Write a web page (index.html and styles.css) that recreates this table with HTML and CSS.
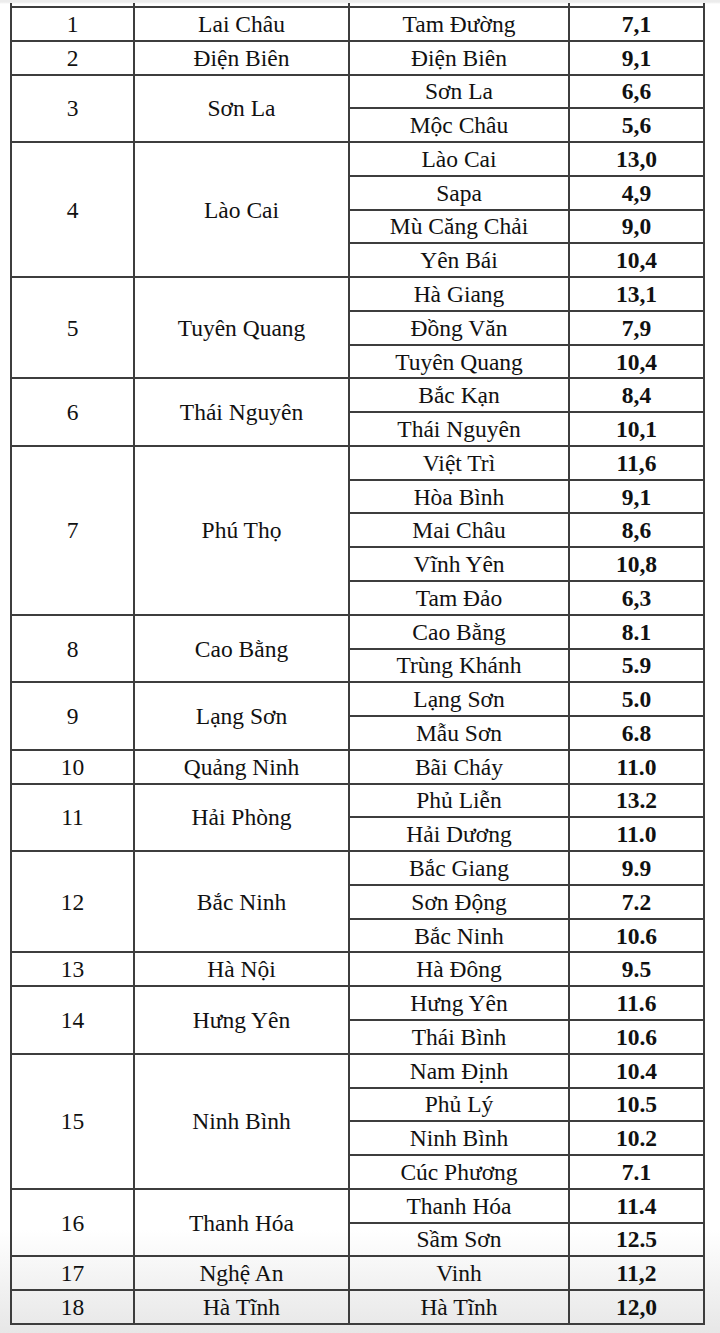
FILE: index.html
```html
<!DOCTYPE html>
<html lang="vi">
<head>
<meta charset="utf-8">
<title>Bảng</title>
<link rel="stylesheet" href="styles.css">
</head>
<body>
<table class="grid">
<colgroup><col class="c1"><col class="c2"><col class="c3"><col class="c4"></colgroup>
<tbody>
<tr class="stub"><td></td><td></td><td></td><td></td></tr>
<tr><td>1</td><td>Lai Châu</td><td>Tam Đường</td><td class="v">7,1</td></tr>
<tr><td>2</td><td>Điện Biên</td><td>Điện Biên</td><td class="v">9,1</td></tr>
<tr><td rowspan="2">3</td><td rowspan="2">Sơn La</td><td>Sơn La</td><td class="v">6,6</td></tr>
<tr><td>Mộc Châu</td><td class="v">5,6</td></tr>
<tr><td rowspan="4">4</td><td rowspan="4">Lào Cai</td><td>Lào Cai</td><td class="v">13,0</td></tr>
<tr><td>Sapa</td><td class="v">4,9</td></tr>
<tr><td>Mù Căng Chải</td><td class="v">9,0</td></tr>
<tr><td>Yên Bái</td><td class="v">10,4</td></tr>
<tr><td rowspan="3">5</td><td rowspan="3">Tuyên Quang</td><td>Hà Giang</td><td class="v">13,1</td></tr>
<tr><td>Đồng Văn</td><td class="v">7,9</td></tr>
<tr><td>Tuyên Quang</td><td class="v">10,4</td></tr>
<tr><td rowspan="2">6</td><td rowspan="2">Thái Nguyên</td><td>Bắc Kạn</td><td class="v">8,4</td></tr>
<tr><td>Thái Nguyên</td><td class="v">10,1</td></tr>
<tr><td rowspan="5">7</td><td rowspan="5">Phú Thọ</td><td>Việt Trì</td><td class="v">11,6</td></tr>
<tr><td>Hòa Bình</td><td class="v">9,1</td></tr>
<tr><td>Mai Châu</td><td class="v">8,6</td></tr>
<tr><td>Vĩnh Yên</td><td class="v">10,8</td></tr>
<tr><td>Tam Đảo</td><td class="v">6,3</td></tr>
<tr><td rowspan="2">8</td><td rowspan="2">Cao Bằng</td><td>Cao Bằng</td><td class="v">8.1</td></tr>
<tr><td>Trùng Khánh</td><td class="v">5.9</td></tr>
<tr><td rowspan="2">9</td><td rowspan="2">Lạng Sơn</td><td>Lạng Sơn</td><td class="v">5.0</td></tr>
<tr><td>Mẫu Sơn</td><td class="v">6.8</td></tr>
<tr><td>10</td><td>Quảng Ninh</td><td>Bãi Cháy</td><td class="v">11.0</td></tr>
<tr><td rowspan="2">11</td><td rowspan="2">Hải Phòng</td><td>Phủ Liễn</td><td class="v">13.2</td></tr>
<tr><td>Hải Dương</td><td class="v">11.0</td></tr>
<tr><td rowspan="3">12</td><td rowspan="3">Bắc Ninh</td><td>Bắc Giang</td><td class="v">9.9</td></tr>
<tr><td>Sơn Động</td><td class="v">7.2</td></tr>
<tr><td>Bắc Ninh</td><td class="v">10.6</td></tr>
<tr><td>13</td><td>Hà Nội</td><td>Hà Đông</td><td class="v">9.5</td></tr>
<tr><td rowspan="2">14</td><td rowspan="2">Hưng Yên</td><td>Hưng Yên</td><td class="v">11.6</td></tr>
<tr><td>Thái Bình</td><td class="v">10.6</td></tr>
<tr><td rowspan="4">15</td><td rowspan="4">Ninh Bình</td><td>Nam Định</td><td class="v">10.4</td></tr>
<tr><td>Phủ Lý</td><td class="v">10.5</td></tr>
<tr><td>Ninh Bình</td><td class="v">10.2</td></tr>
<tr><td>Cúc Phương</td><td class="v">7.1</td></tr>
<tr><td rowspan="2">16</td><td rowspan="2">Thanh Hóa</td><td>Thanh Hóa</td><td class="v">11.4</td></tr>
<tr><td>Sầm Sơn</td><td class="v">12.5</td></tr>
<tr><td>17</td><td>Nghệ An</td><td>Vinh</td><td class="v">11,2</td></tr>
<tr><td>18</td><td>Hà Tĩnh</td><td>Hà Tĩnh</td><td class="v">12,0</td></tr>
</tbody>
</table>
</body>
</html>
```
FILE: styles.css
```css
html {
  height: 1333px;
  background: linear-gradient(to bottom, #ececec 0, #ececec 2px, #ffffff 4px, #ffffff 1230px, #f3f3f3 1280px, #e7e7e7 1333px);
}
body {
  margin: 0;
  padding: 3px 0 0 10px;
  background: transparent;
  font-family: "Liberation Serif", "DejaVu Serif", serif;
  color: #111;
}
.grid {
  border-collapse: collapse;
  table-layout: fixed;
  width: 695px;
  font-family: "Liberation Serif", "DejaVu Serif", serif;
  font-size: 23.5px;
}
.c1 { width: 123px; }
.c2 { width: 215px; }
.c3 { width: 220px; }
.c4 { width: 135px; }
.grid td {
  border: 2px solid #3d3d3d;
  padding: 0;
  text-align: center;
  vertical-align: middle;
  white-space: nowrap;
  line-height: 26px;
}
.grid tr { height: 33.77px; }
.grid tr.stub { height: 4px; }
.grid tr.stub td {
  border-top: none;
  line-height: 0;
  height: 0;
}
.grid td.v { font-weight: bold; }
```
